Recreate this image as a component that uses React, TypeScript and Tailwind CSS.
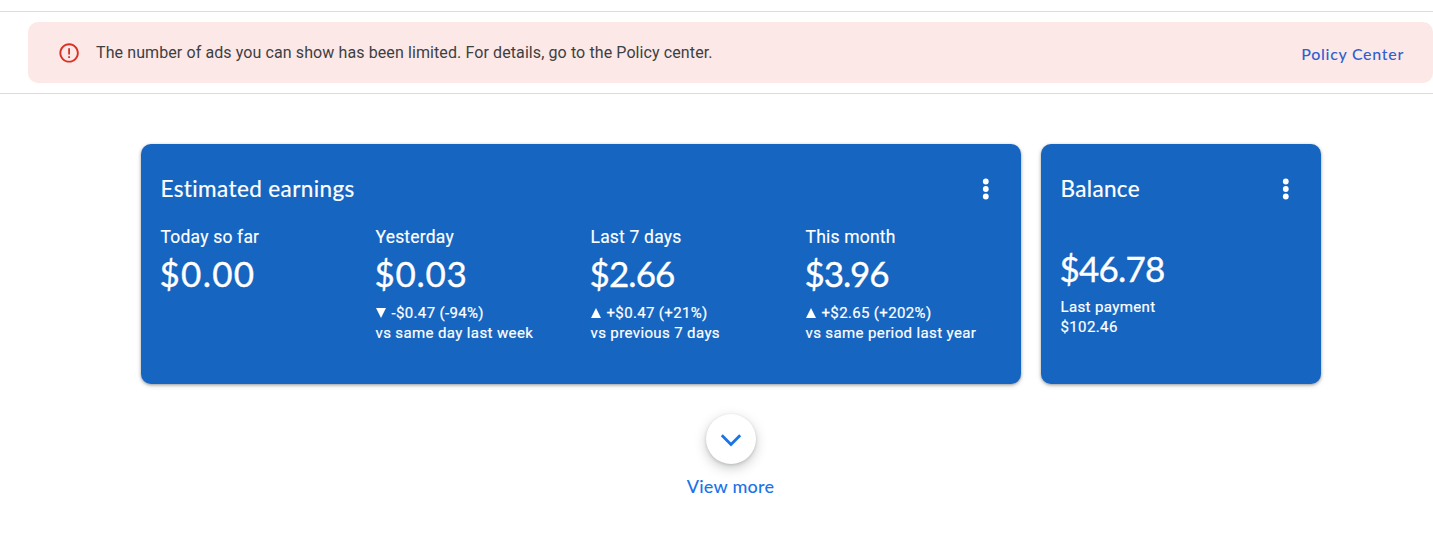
import React from 'react';

type Stat = {
  label: string;
  amount: string;
  amountTracking: string;
  trend?: 'up' | 'down';
  change?: string;
  compare?: string;
};

const stats: Stat[] = [
  { label: 'Today so far', amount: '$0.00', amountTracking: 'tracking-[1.3px]' },
  {
    label: 'Yesterday', amount: '$0.03', amountTracking: 'tracking-[0.7px]',
    trend: 'down', change: '-$0.47 (-94%)', compare: 'vs same day last week',
  },
  {
    label: 'Last 7 days', amount: '$2.66', amountTracking: 'tracking-[-0.9px]',
    trend: 'up', change: '+$0.47 (+21%)', compare: 'vs previous 7 days',
  },
  {
    label: 'This month', amount: '$3.96', amountTracking: 'tracking-[-1.1px]',
    trend: 'up', change: '+$2.65 (+202%)', compare: 'vs same period last year',
  },
];

function MoreIcon() {
  return (
    <svg className="h-[30px] w-[30px]" viewBox="0 0 30 30" fill="currentColor">
      <circle cx="14.8" cy="7.5" r="2.9" />
      <circle cx="14.8" cy="15" r="2.9" />
      <circle cx="14.8" cy="22.5" r="2.9" />
    </svg>
  );
}

function CardHeader({ title, tracking }: { title: string; tracking: string }) {
  return (
    <div className="flex h-[30px] items-center justify-between">
      <h2 className={`font-[Lato,sans-serif] text-[22.5px] leading-[30px] [-webkit-text-stroke:0.2px] ${tracking}`}>{title}</h2>
      <button aria-label="More options"><MoreIcon /></button>
    </div>
  );
}

const cardClass =
  'h-[240px] rounded-[10px] bg-[#1665c1] pt-[30px] pr-5 pl-[19.5px] text-white shadow-[0_1px_3px_rgba(60,64,67,0.45),0_2px_5px_rgba(60,64,67,0.15)]';

export default function App() {
  return (
    <div className="h-[537px] overflow-hidden bg-white pt-[11px] font-[Roboto,sans-serif]">
      <div className="h-[83px] border-y border-[#dadce0] pt-[10px] pl-7">
        <div className="flex h-[61px] items-center rounded-[10px] bg-[#fce8e6] pr-[29px] pl-[29px]">
          <svg className="h-6 w-6 shrink-0 text-[#d93025]" viewBox="0 0 24 24" fill="currentColor">
            <path d="M11.2 15.2h1.8v1.8h-1.8zm0-8h1.8v6.2h-1.8zm.99-5C6.67 2.2 2.4 6.68 2.4 12s4.27 9.6 9.79 9.6c5.33 0 9.61-4.28 9.61-9.6S17.52 2.2 12.19 2.2zM12.1 19.8c-4.32 0-7.8-3.48-7.8-7.8s3.48-7.8 7.8-7.8 7.8 3.48 7.8 7.8-3.48 7.8-7.8 7.8z" />
          </svg>
          <p className="ml-[15px] text-[16px] leading-6 tracking-[0.1px] text-[#3c4043]">
            The number of ads you can show has been limited. For details, go to the Policy center.
          </p>
          <a className="mt-[3px] ml-auto font-[Lato,sans-serif] text-[16px] leading-6 font-medium tracking-[0.7px] text-[#3060d0]">
            Policy Center
          </a>
        </div>
      </div>

      <main className="pt-[50px]">
        <div className="flex gap-5 pl-[141px]">
          <section className={`w-[880px] ${cardClass}`}>
            <CardHeader title="Estimated earnings" tracking="tracking-[0.4px]" />
            <div className="mt-[21px] grid grid-cols-[215px_215px_215px_1fr]">
              {stats.map((s) => (
                <div key={s.label} className="whitespace-nowrap">
                  <div className="text-[17.5px] leading-[25px] tracking-[0.2px] [-webkit-text-stroke:0.15px]">{s.label}</div>
                  <div className={`-mt-px -ml-px font-[Lato,sans-serif] text-[35px] leading-[49px] [-webkit-text-stroke:0.35px] ${s.amountTracking}`}>{s.amount}</div>
                  {s.change && (
                    <div className="mt-[5px] text-[15px] leading-5 [-webkit-text-stroke:0.2px]">
                      <div className="flex items-center tracking-[0.35px]">
                        <svg className="mr-[6px] h-[10px] w-[10px]" viewBox="0 0 10 10" fill="currentColor">
                          <path d={s.trend === 'up' ? 'M0 10 5 0l5 10z' : 'M0 0h10L5 10z'} />
                        </svg>
                        <span>{s.change}</span>
                      </div>
                      <div className="tracking-[0.38px]">{s.compare}</div>
                    </div>
                  )}
                </div>
              ))}
            </div>
          </section>

          <section className={`w-[280px] ${cardClass}`}>
            <CardHeader title="Balance" tracking="tracking-[0.35px]" />
            <div className="mt-[39px] -ml-px font-[Lato,sans-serif] text-[35px] leading-[50px] tracking-[-0.8px] [-webkit-text-stroke:0.35px]">$46.78</div>
            <div className="mt-1 text-[15px] leading-5 tracking-[0.38px] [-webkit-text-stroke:0.2px]">
              <div>Last payment</div>
              <div>$102.46</div>
            </div>
          </section>
        </div>

        <div className="mt-[30px] flex flex-col items-center pl-7">
          <button
            aria-label="View more"
            className="flex h-[50px] w-[50px] items-center justify-center rounded-full bg-white shadow-[0_1px_3px_rgba(60,64,67,0.2),0_4px_12px_rgba(60,64,67,0.28)]"
          >
            <svg className="h-[30px] w-[30px] text-[#1a73e8]" viewBox="0 0 30 30" fill="none" stroke="currentColor" strokeWidth="2.8">
              <path d="M5.8 11.3 15 20.5 24.2 11.3" />
            </svg>
          </button>
          <span className="mt-[10px] font-[Lato,sans-serif] text-[18px] leading-[25px] font-medium tracking-[0.25px] text-[#1a73e8]">View more</span>
        </div>
      </main>
    </div>
  );
}
